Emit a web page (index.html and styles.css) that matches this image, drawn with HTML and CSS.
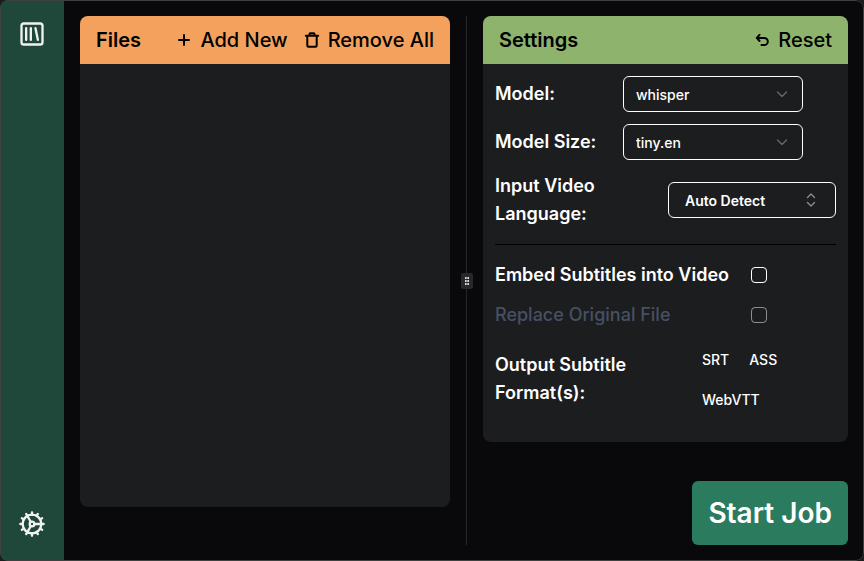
FILE: index.html
```html
<!DOCTYPE html>
<html lang="en">
<head>
<meta charset="utf-8">
<meta name="viewport" content="width=device-width, initial-scale=1">
<title>Subtitle Generator</title>
<link rel="stylesheet" href="styles.css">
</head>
<body>
<div class="window">
  <nav class="sidebar">
    <button class="nav-button" type="button" aria-label="Library">
      <svg class="nav-icon" viewBox="0 0 24 24"><rect x="3" y="3" width="18" height="18" rx="2"/><path d="M7 7v10M11 7v10M15 7l2 10"/></svg>
    </button>
    <button class="nav-button" type="button" aria-label="Preferences">
      <svg class="nav-icon" viewBox="0 0 24 24"><circle cx="12" cy="12" r="8"/><circle cx="12" cy="12" r="2"/><path d="M12 2v2M12 22v-2M17 20.66l-1-1.73M11 10.27 7 3.34M20.66 17l-1.73-1M3.34 7l1.73 1M14 12h8M2 12h2M20.66 7l-1.73 1M3.34 17l1.73-1M17 3.34l-1 1.73M11 13.73l-4 6.93"/></svg>
    </button>
  </nav>

  <main class="workspace">
    <section class="pane files-pane">
      <div class="panel files-panel">
        <header class="panel-header files-header">
          <h2 class="panel-title">Files</h2>
          <div class="panel-actions">
            <button class="action" type="button">
              <svg class="action-icon" viewBox="0 0 16 16"><path d="M8 3v10M3 8h10"/></svg>
              Add New
            </button>
            <button class="action" type="button">
              <svg class="action-icon" viewBox="0 0 16 16"><path d="M1.800 3.700h12.400M5.500 3.500V2q0-.7.7-.7h3.600q.7 0 .7.7v1.500M3.300 4v9.500q0 1.200 1.200 1.200h7q1.200 0 1.200-1.200V4"/></svg>
              Remove All
            </button>
          </div>
        </header>
      </div>
    </section>

    <div class="divider" role="separator">
      <span class="grip"><svg class="grip-icon" viewBox="0 0 4 8"><path d="M0 0h1v2H0zM3 0h1v2H3zM0 3h1v2H0zM3 3h1v2H3zM0 6h1v2H0zM3 6h1v2H3z"/><path class="grip-core" d="M1 0h2v2H1zM1 3h2v2H1zM1 6h2v2H1z"/></svg></span>
    </div>

    <section class="pane settings-pane">
      <div class="panel">
        <header class="panel-header settings-header">
          <h2 class="panel-title">Settings</h2>
          <button class="action" type="button">
            <svg class="action-icon" viewBox="0 0 16 16"><path d="M5.500 2.800 2.800 5.900 5.500 9M3.200 5.900h7a3.600 3.600 0 0 1 0 7.200H7.500"/></svg>
            Reset
          </button>
        </header>
        <form class="settings-form">
          <div class="row">
            <label class="label model-label" for="model">Model:</label>
            <div class="select">
              <select class="select-input" id="model"><option>whisper</option></select>
              <svg class="chevron" viewBox="0 0 16 16"><path d="m3.500 6 4.500 4.500L12.500 6"/></svg>
            </div>
          </div>
          <div class="row">
            <label class="label model-label" for="size">Model Size:</label>
            <div class="select">
              <select class="select-input" id="size"><option>tiny.en</option></select>
              <svg class="chevron" viewBox="0 0 16 16"><path d="m3.500 6 4.500 4.500L12.500 6"/></svg>
            </div>
          </div>
          <div class="row spread">
            <label class="label language-label" for="language">Input Video Language:</label>
            <button class="combobox" id="language" type="button">
              Auto Detect
              <svg class="sorter" viewBox="0 0 16 16"><path d="m4.500 5.500 3.500-3.500 3.500 3.500M4.500 10.500 8 14l3.500-3.500"/></svg>
            </button>
          </div>
          <hr class="rule">
          <div class="check-row">
            <label class="label" for="embed">Embed Subtitles into Video</label>
            <input class="checkbox" id="embed" type="checkbox">
          </div>
          <div class="check-row">
            <label class="label muted" for="replace">Replace Original File</label>
            <input class="checkbox" id="replace" type="checkbox" disabled>
          </div>
          <div class="format-row">
            <span class="label format-label" id="formats">Output Subtitle Format(s):</span>
            <div class="formats" role="group" aria-labelledby="formats">
              <button class="toggle" type="button">SRT</button>
              <button class="toggle" type="button">ASS</button>
              <button class="toggle" type="button">WebVTT</button>
            </div>
          </div>
        </form>
      </div>
      <button class="start" type="button">Start Job</button>
    </section>
  </main>
</div>
</body>
</html>
```

FILE: styles.css
```css
* {
  box-sizing: border-box;
}

body {
  margin: 0;
  background: #1c1c1c;
  color: #fff;
  font-family: Inter, "Liberation Sans", sans-serif;
}

button,
select {
  font: inherit;
  color: inherit;
}

button {
  padding: 0;
  border: 0;
  background: none;
  cursor: pointer;
}

svg {
  flex: none;
  fill: none;
  stroke: currentColor;
  stroke-linecap: round;
  stroke-linejoin: round;
}

.window {
  position: relative;
  display: flex;
  min-height: 100vh;
  overflow: hidden;
  border-radius: 8px;
  background: #09090b;
}

.window::after {
  content: "";
  position: absolute;
  inset: 0;
  border: 1px solid #3f4040;
  border-radius: 8px;
  pointer-events: none;
}

.sidebar {
  display: flex;
  flex: none;
  flex-direction: column;
  align-items: center;
  justify-content: space-between;
  width: 64px;
  padding: 20px 0 23px;
  background: #20483a;
  color: #f1f1f1;
}

.nav-button {
  display: flex;
}

.nav-icon {
  width: 28px;
  height: 28px;
  stroke-width: 2;
}

.workspace {
  display: flex;
  flex: 1;
  min-width: 0;
  padding: 16px;
}

.pane {
  display: flex;
  flex-direction: column;
  min-width: 0;
}

.files-pane {
  flex: 370;
  padding-bottom: 38px;
}

.settings-pane {
  flex: 365;
  justify-content: space-between;
}

.panel {
  overflow: hidden;
  border-radius: 8px;
  background: #1c1d1f;
}

.files-panel {
  flex: 1;
}

.panel-header {
  display: flex;
  align-items: center;
  justify-content: space-between;
  height: 48px;
  padding: 0 16px;
  color: #000;
}

.files-header {
  background: #f4a15d;
}

.settings-header {
  background: #8eb36c;
}

.panel-title {
  margin: 0;
  font-size: 20px;
  font-weight: 600;
  line-height: 28px;
}

.panel-actions {
  display: flex;
  gap: 16px;
}

.action {
  display: flex;
  align-items: center;
  gap: 8px;
  font-size: 20px;
  font-weight: 500;
  line-height: 28px;
  white-space: nowrap;
}

.action-icon {
  width: 16px;
  height: 16px;
  stroke-width: 2;
}

.divider {
  display: flex;
  flex: none;
  align-items: center;
  justify-content: center;
  width: 1px;
  margin: 0 16px;
  background: #27272a;
}

.grip {
  display: flex;
  flex: none;
  align-items: center;
  justify-content: center;
  width: 12px;
  height: 16px;
  border-radius: 2px;
  background: #27282a;
}

.grip-icon {
  width: 4px;
  height: 8px;
  fill: #ddd;
  stroke: none;
}

.grip-core {
  fill: #999;
}

.settings-form {
  display: flex;
  flex-direction: column;
  gap: 12px;
  padding: 12px 12px 23px;
}

.row {
  display: flex;
  align-items: center;
}

.spread {
  justify-content: space-between;
}

.label {
  font-size: 18px;
  font-weight: 600;
  line-height: 28px;
}

.model-label {
  width: 128px;
}

.language-label {
  width: 128px;
}

.muted {
  color: #475063;
  font-weight: 500;
}

.select {
  display: grid;
  align-items: center;
  width: 180px;
}

.select-input {
  grid-area: 1 / 1;
  width: 100%;
  height: 36px;
  padding: 0 12px;
  border: 1px solid #fff;
  border-radius: 6px;
  appearance: none;
  background: transparent;
  font-size: 14px;
  font-weight: 500;
}

.chevron {
  grid-area: 1 / 1;
  justify-self: end;
  width: 16px;
  height: 16px;
  margin-right: 13px;
  color: #67686a;
  stroke-width: 1.4;
  pointer-events: none;
}

.combobox {
  display: flex;
  align-items: center;
  justify-content: space-between;
  width: 168px;
  height: 36px;
  padding: 0 16px;
  border: 1px solid #fff;
  border-radius: 6px;
  font-size: 14px;
  font-weight: 600;
}

.sorter {
  width: 16px;
  height: 16px;
  color: #8e8e8f;
  stroke-width: 1.4;
}

.rule {
  width: 100%;
  height: 1px;
  margin: 4px 0;
  border: 0;
  background: #000;
}

.check-row {
  display: grid;
  grid-template-columns: 1fr 85px;
  align-items: center;
}

.checkbox {
  width: 16px;
  height: 16px;
  margin: 0;
  border: 1px solid #fff;
  border-radius: 4px;
  appearance: none;
}

.checkbox:disabled {
  opacity: 0.5;
}

.format-row {
  display: flex;
  align-items: center;
  justify-content: space-between;
  margin-top: -2px;
}

.format-label {
  width: 150px;
}

.formats {
  display: flex;
  flex-wrap: wrap;
  width: 144px;
}

.toggle {
  height: 40px;
  padding: 0 10px;
  font-size: 14px;
  font-weight: 500;
}

.start {
  align-self: flex-end;
  height: 64px;
  padding: 0 16px;
  border-radius: 6px;
  background: #2b7b5f;
  font-size: 28px;
  font-weight: 600;
}
```
